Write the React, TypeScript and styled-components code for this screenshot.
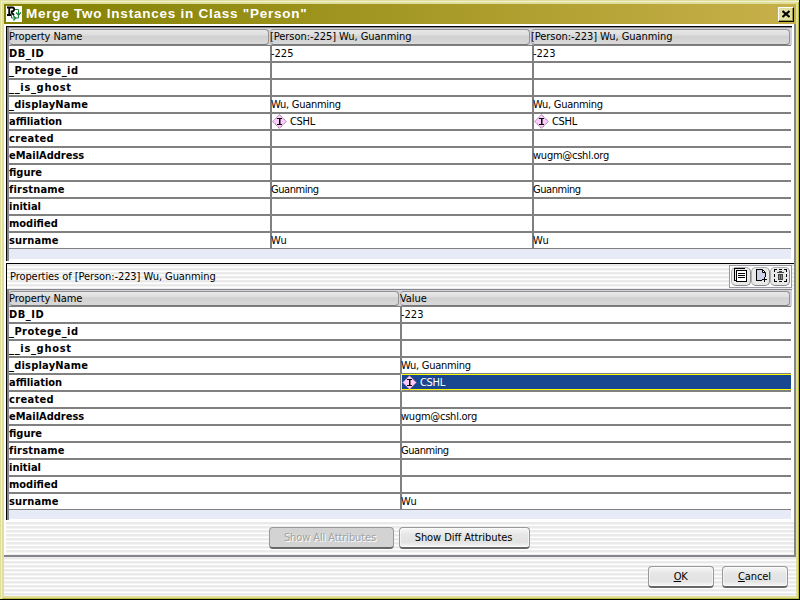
import React from "react";
import styled, { createGlobalStyle, css } from "styled-components";

const GlobalStyle = createGlobalStyle`
  body { margin: 0; background: #000; overflow: hidden; }
  * { box-sizing: border-box; }
`;

const stripes = css`
  background: repeating-linear-gradient(
    to bottom, #ebebeb 0, #ebebeb 1px, #e9e9e9 1px, #e9e9e9 2px, #f4f4f4 2px, #f4f4f4 3px, #fff 3px, #fff 4px
  );
`;

const Dialog = styled.div`
  width: 800px;
  height: 600px;
  padding: 3px 2px 2px 3px;
  border-right: 1px solid #000;
  border-bottom: 1px solid #000;
  background: #dfdf9b;
  box-shadow: inset 1px 1px 0 #dfdf9b, inset 2px 2px 0 #f1f1cf, inset -1px -1px 0 #b8b83c;
  font: 11px/15px "DejaVu Sans Condensed", "DejaVu Sans", sans-serif;
  font-stretch: condensed;
  color: #000;
  white-space: nowrap;
`;
const Inner = styled.div`
  display: flex;
  flex-direction: column;
  height: 592px;
  margin: 1px 1px 0 1px;
`;
const TitleBar = styled.header`
  display: flex;
  align-items: center;
  height: 20px;
  flex: none;
  padding: 0 2px 0 2px;
  background: linear-gradient(to right, #808000, #c8b04a);
`;
const Title = styled.h1`
  flex: 1;
  margin: 0 0 0 4px;
  color: #fff;
  font: bold 13.5px/20px "Liberation Sans", Arial, sans-serif;
  letter-spacing: 0.76px;
`;
const CloseButton = styled.button`
  display: grid;
  place-items: center;
  width: 16px;
  height: 15px;
  padding: 0;
  border: 1px solid;
  border-color: #fff #000 #000 #fff;
  background: #e0e0a0;
  box-shadow: inset -1px -1px 0 #98984a;
`;
const Pane = styled.main`
  display: flex;
  flex-direction: column;
  flex: none;
  height: 533px;
  padding: 2px 0 0 2px;
  background: #fff;
  border-right: 2px solid #85858d;
  border-bottom: 2px solid #85858d;
`;
const TablePanel = styled.section<{ $height: number; $top?: boolean }>`
  flex: none;
  height: ${(p) => p.$height}px;
  margin-right: 2px;
  border-left: 1px solid #000;
  box-shadow: ${(p) => (p.$top ? "inset 0 1px 0 #000, inset 2px 2px 0 #85858d" : "inset 2px 1px 0 #85858d")};
  padding: ${(p) => (p.$top ? 2 : 1)}px 0 0 2px;
`;
const HeaderRow = styled.div<{ $cols: string; $height: number }>`
  display: grid;
  grid-template-columns: ${(p) => p.$cols};
  height: ${(p) => p.$height}px;
  padding-top: 1px;
  padding-bottom: 1px;
  background: #d2d2dc;
  line-height: ${(p) => p.$height - 3}px;
`;
const HeaderCell = styled.div`
  display: flex;
  align-items: center;
  margin-right: 1px;
  border: 1px solid #929292;
  border-left-color: #b4b4b4;
  border-bottom-color: #777;
  border-radius: 4px;
  background: linear-gradient(#e8e8e8 0, #dedede 35%, #d0d0d0 45%, #d9d9d9 100%);
  text-indent: -1px;
  letter-spacing: -0.06px;
`;
const Row = styled.div<{ $cols: string }>`
  display: grid;
  grid-template-columns: ${(p) => p.$cols};
  height: 17px;
`;
const Cell = styled.div<{ $name?: boolean; $selected?: boolean }>`
  display: flex;
  align-items: center;
  min-width: 0;
  border: 1px solid #808080;
  border-left-width: ${(p) => (p.$name ? 0 : 1)}px;
  font-weight: ${(p) => (p.$name ? "bold" : "normal")};
  background: #fff;
  &:last-child { border-right: 0; }
  ${(p) =>
    p.$selected &&
    css`
      border-top-color: #ffff00;
      border-left-color: #ffff00;
      box-shadow: inset 0 -1px 0 #ffff00;
      background: #1a4890;
      color: #fff;
    `}
`;
const Filler = styled.div<{ $height: number }>`
  width: 782px;
  height: ${(p) => p.$height}px;
  background: #e7ebf7;
`;
const Bar = styled.div`
  display: flex;
  align-items: center;
  justify-content: space-between;
  flex: none;
  height: 26px;
  margin-top: 2px;
  padding: 0 2px 0 3px;
  border-top: 1px solid #000;
  border-left: 1px solid #000;
  ${stripes}
`;
const ToolGroup = styled.div`
  display: flex;
  width: 63px;
  height: 23px;
  padding: 1px;
  border: 1px solid #9898a4;
  background: #fff;
`;
const ToolButton = styled.button`
  display: grid;
  place-items: center;
  flex: 1;
  min-width: 0;
  padding: 0 0 2px;
  border: 1px solid #b0b0b0;
  border-right-color: #888;
  border-bottom-color: #888;
  border-radius: 5px;
  background: #e9e9e9;
`;
const Actions = styled.div`
  display: flex;
  flex: 1;
  align-items: flex-start;
  justify-content: center;
  gap: 5px;
  padding: 5px 2px 0 0;
  margin-top: 2px;
  ${stripes}
`;
const Footer = styled.footer`
  display: flex;
  flex: 1;
  align-items: flex-start;
  justify-content: flex-end;
  gap: 8px;
  padding: 9px 8px 0 0;
  ${stripes}
`;
const Button = styled.button<{ $width: number; $spacing?: number }>`
  width: ${(p) => p.$width}px;
  height: 22px;
  padding: 0 1px 0 0;
  border: 1px solid #999;
  border-bottom: 2px solid #666;
  border-radius: 4px;
  background: linear-gradient(#f7f7f7, #e6e6e6 35%, #e3e3e3 75%, #f8f8f8);
  box-shadow: inset 0 0 0 1px #ffffff88;
  color: #000;
  font: inherit;
  line-height: 20px;
  letter-spacing: ${(p) => p.$spacing ?? 0}px;
  &:disabled {
    background: #d3d3d3;
    color: #a2a2a2;
    text-shadow: 1px 1px 0 #fff;
    box-shadow: none;
    padding-right: 2px;
  }
`;
const Text = styled.span<{ $spacing: number }>`
  letter-spacing: ${(p) => p.$spacing}px;
`;
const ValueText = styled(Text)`
  margin-left: -1px;
`;
const Instance = styled.span`
  display: flex;
  align-items: center;
  gap: 3px;
`;

const AppIcon = () => (
  <svg width="16" height="16" viewBox="0 0 16 16">
    <rect width="16" height="16" fill="#fff" />
    <path d="M8 3.500h4.500v8.500H5.500v-4" fill="none" stroke="#16803c" />
    <path d="M3 9.500l2.500-2 2.500 2M10 6.500l2.500 2.500L15 6.500M7.500 10l2 2-2 2.500" fill="none" stroke="#16803c" strokeWidth="1.300" />
    <path d="M1 1.500h5.500q2 .3 1.700 2.200T5 5.500M3.200 2v7M1 9h4M5 5.500l3 3.500" fill="none" stroke="#000" strokeWidth="1.800" />
  </svg>
);
const InstanceIcon = () => (
  <svg width="15" height="15" viewBox="0 0 15 15">
    <path d="M7.500.5 14.500 7.500 7.500 14.500.5 7.500z" fill="#fcf" />
    <path d="M7.500.7 14.300 7.500 7.500 14.300.7 7.500z" fill="none" stroke="#806080" strokeWidth=".9" strokeDasharray="1.400 .6" />
    <path d="M5 4h5v1H5zM7 5h1v5H7zM5 10h5v1H5z" fill="#000" shapeRendering="crispEdges" />
    <path d="M7 5h1.500v5H7z" fill="#000" />
  </svg>
);
const ViewIcon = () => (
  <svg width="15" height="15" viewBox="0 0 15 15" fill="none" stroke="#000" shapeRendering="crispEdges">
    <path d="M1.500 12.500V.5H11.500M1.500 12.500H4" />
    <path d="M3.500 2.500h10v11h-10z" fill="#fff" />
    <path d="M5 5.500h7M5 7.500h7M5 9.500h7" />
  </svg>
);
const CreateIcon = () => (
  <svg width="15" height="15" viewBox="0 0 15 15" fill="none" stroke="#000">
    <path d="M3.500 1.500h6l3 3V9l-3 3.500h-6z" fill="#ccd2e8" stroke="none" />
    <path d="M9 1.500H3.500v11H9M12.500 5v4" shapeRendering="crispEdges" />
    <path d="M9.500 1.500v3h3z" fill="#fff" />
    <path d="M9 11.500h5M11.500 9v5" shapeRendering="crispEdges" />
  </svg>
);
const DeleteIcon = () => (
  <svg width="15" height="15" viewBox="0 0 15 15" fill="none" stroke="#000" shapeRendering="crispEdges">
    <path d="M1.500 4V1.500H4M6 1.500h3M11 1.500h2.500V4M13.500 6v3M13.500 11v2.500H11M9 13.500H6M4 13.500H1.500V11M1.500 9V6" />
    <path d="M4 4.500h7M6 3.500h3" stroke="#444" />
    <path d="M5 6h5v6H5z" fill="#444" stroke="none" />
    <path d="M6.500 7v4M8.500 7v4" stroke="#888" />
  </svg>
);

const names = [
  "DB_ID", "_Protege_id", "__is_ghost", "_displayName", "affiliation", "created",
  "eMailAddress", "figure", "firstname", "initial", "modified", "surname",
];
const nameSpacing: Record<string, number> = {
  DB_ID: 0.5, _Protege_id: 0.45, __is_ghost: 0.7, _displayName: 0.22, created: 0.33, firstname: 0.2, surname: 0.15,
};
const valueSpacing: Record<string, number> = {
  _displayName: -0.28, firstname: -0.45, eMailAddress: -0.24,
};
const first: Record<string, string> = {
  DB_ID: "-225", _displayName: "Wu, Guanming", affiliation: "CSHL", firstname: "Guanming", surname: "Wu",
};
const second: Record<string, string> = { ...first, DB_ID: "-223", eMailAddress: "wugm@cshl.org" };

interface TableProps {
  headers: string[];
  headerCols: string;
  cols: string;
  headerHeight: number;
  records: Record<string, string>[];
  selected?: string;
  filler: number;
}
const PropertyTable = ({ headers, headerCols, cols, headerHeight, records, selected, filler }: TableProps) => (
  <>
    <HeaderRow $cols={headerCols} $height={headerHeight}>
      {headers.map((h) => <HeaderCell key={h}>{h}</HeaderCell>)}
    </HeaderRow>
    {names.map((name) => (
      <Row key={name} $cols={cols}>
        <Cell $name><Text $spacing={nameSpacing[name] ?? 0}>{name}</Text></Cell>
        {records.map((record, i) => (
          <Cell key={i} $selected={selected === name}>
            {name === "affiliation" ? (
              <Instance><InstanceIcon /><Text $spacing={-0.3}>{record[name]}</Text></Instance>
            ) : (
              <ValueText $spacing={valueSpacing[name] ?? 0}>{record[name]}</ValueText>
            )}
          </Cell>
        ))}
      </Row>
    ))}
    <Filler $height={filler} />
  </>
);

export default function App() {
  return (
    <Dialog>
      <GlobalStyle />
      <Inner>
        <TitleBar>
          <AppIcon />
          <Title>Merge Two Instances in Class "Person"</Title>
          <CloseButton aria-label="Close">
            <svg width="8" height="8" viewBox="0 0 8 8"><path d="M.5 1l7 6M7.500 1l-7 6" stroke="#000" strokeWidth="2" /></svg>
          </CloseButton>
        </TitleBar>
        <Pane>
          <TablePanel $height={235} $top>
            <PropertyTable
              headers={["Property Name", "[Person:-225] Wu, Guanming", "[Person:-223] Wu, Guanming"]}
              headerCols="261px 261px 260px"
              cols="262px 262px 258px"
              headerHeight={17}
              records={[first, second]}
              filler={10}
            />
          </TablePanel>
          <Bar>
            <Text $spacing={-0.08}>Properties of [Person:-223] Wu, Guanming</Text>
            <ToolGroup>
              <ToolButton aria-label="View"><ViewIcon /></ToolButton>
              <ToolButton aria-label="Create"><CreateIcon /></ToolButton>
              <ToolButton aria-label="Delete"><DeleteIcon /></ToolButton>
            </ToolGroup>
          </Bar>
          <TablePanel $height={231}>
            <PropertyTable
              headers={["Property Name", "Value"]}
              headerCols="391px 391px"
              cols="392px 390px"
              headerHeight={16}
              records={[second]}
              selected="affiliation"
              filler={9}
            />
          </TablePanel>
          <Actions>
            <Button $width={125} $spacing={-0.1} disabled>Show All Attributes</Button>
            <Button $width={131} $spacing={-0.08}>Show Diff Attributes</Button>
          </Actions>
        </Pane>
        <Footer>
          <Button $width={66} $spacing={-0.3}><u>O</u>K</Button>
          <Button $width={66} $spacing={-0.1}><u>C</u>ancel</Button>
        </Footer>
      </Inner>
    </Dialog>
  );
}
